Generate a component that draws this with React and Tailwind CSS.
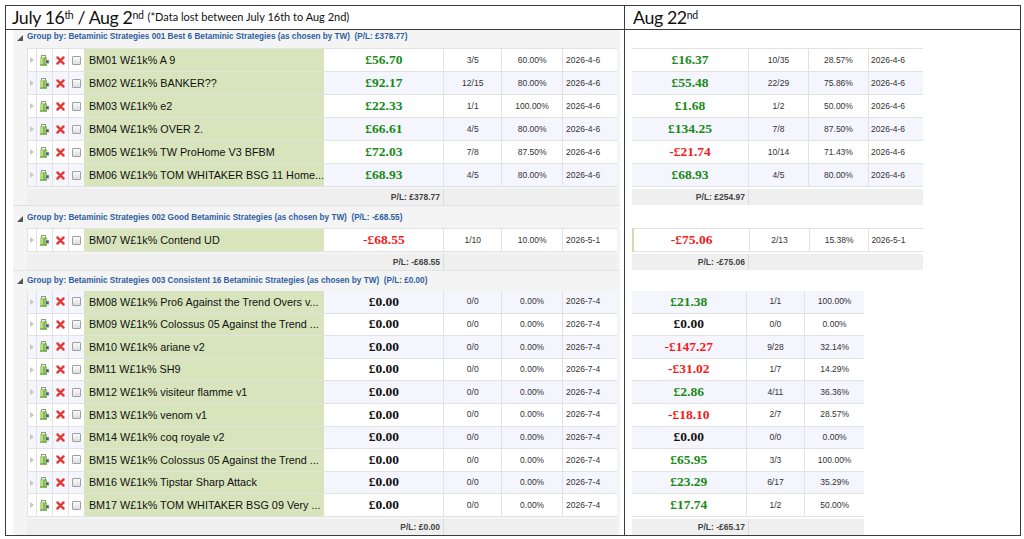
import React from 'react';

// Betaminic strategy comparison: July 16th / Aug 2nd vs Aug 22nd

const group1 = [
  ['BM01 W£1k% A 9', '£56.70', 'g', '3/5', '60.00%', '2026-4-6'],
  ['BM02 W£1k% BANKER??', '£92.17', 'g', '12/15', '80.00%', '2026-4-6'],
  ['BM03 W£1k% e2', '£22.33', 'g', '1/1', '100.00%', '2026-4-6'],
  ['BM04 W£1k% OVER 2.', '£66.61', 'g', '4/5', '80.00%', '2026-4-6'],
  ['BM05 W£1k% TW ProHome V3 BFBM', '£72.03', 'g', '7/8', '87.50%', '2026-4-6'],
  ['BM06 W£1k% TOM WHITAKER BSG 11 Home...', '£68.93', 'g', '4/5', '80.00%', '2026-4-6'],
];

const group1Right = [
  ['£16.37', 'g', '10/35', '28.57%', '2026-4-6'],
  ['£55.48', 'g', '22/29', '75.86%', '2026-4-6'],
  ['£1.68', 'g', '1/2', '50.00%', '2026-4-6'],
  ['£134.25', 'g', '7/8', '87.50%', '2026-4-6'],
  ['-£21.74', 'r', '10/14', '71.43%', '2026-4-6'],
  ['£68.93', 'g', '4/5', '80.00%', '2026-4-6'],
];

const group2 = [['BM07 W£1k% Contend UD', '-£68.55', 'r', '1/10', '10.00%', '2026-5-1']];
const group2Right = [['-£75.06', 'r', '2/13', '15.38%', '2026-5-1']];

const group3Names = [
  'BM08 W£1k% Pro6 Against the Trend Overs v...',
  'BM09 W£1k% Colossus 05 Against the Trend ...',
  'BM10 W£1k% ariane v2',
  'BM11 W£1k% SH9',
  'BM12 W£1k% visiteur flamme v1',
  'BM13 W£1k% venom v1',
  'BM14 W£1k% coq royale v2',
  'BM15 W£1k% Colossus 05 Against the Trend ...',
  'BM16 W£1k% Tipstar Sharp Attack',
  'BM17 W£1k% TOM WHITAKER BSG 09 Very ...',
];
const group3 = group3Names.map((n) => [n, '£0.00', 'k', '0/0', '0.00%', '2026-7-4']);

const group3Right = [
  ['£21.38', 'g', '1/1', '100.00%'],
  ['£0.00', 'k', '0/0', '0.00%'],
  ['-£147.27', 'r', '9/28', '32.14%'],
  ['-£31.02', 'r', '1/7', '14.29%'],
  ['£2.86', 'g', '4/11', '36.36%'],
  ['-£18.10', 'r', '2/7', '28.57%'],
  ['£0.00', 'k', '0/0', '0.00%'],
  ['£65.95', 'g', '3/3', '100.00%'],
  ['£23.29', 'g', '6/17', '35.29%'],
  ['£17.74', 'g', '1/2', '50.00%'],
];

function Money({ value, tone }) {
  const color = tone === 'g' ? 'text-[#178a17]' : tone === 'r' ? 'text-[#f01c1c]' : 'text-[#111]';
  return (
    <span className={`font-['Liberation_Serif',serif] text-[13.5px] font-bold ${color}`}>{value}</span>
  );
}

function Expander() {
  return (
    <svg width="4" height="6" viewBox="0 0 4 6">
      <polygon points="0,0 4,3 0,6" fill="#c8c8c8" />
    </svg>
  );
}

function EditIcon() {
  return (
    <svg width="11" height="11" viewBox="0 0 11 11">
      <rect x="2.5" y="0.5" width="4" height="2.5" fill="none" stroke="#8a9a80" strokeWidth="1" />
      <rect x="1" y="2.5" width="7" height="8" fill="#86bf4c" />
      <rect x="1" y="2.5" width="3" height="8" fill="#b4dc7c" />
      <rect x="6.5" y="5" width="3.5" height="3.5" fill="#5a636c" stroke="#c9d0d6" strokeWidth="0.6" />
      <rect x="1" y="9.5" width="7" height="1" fill="#5a9a34" />
    </svg>
  );
}

function DeleteIcon() {
  return (
    <svg width="9" height="9" viewBox="0 0 9 9">
      <path d="M1.5 1.5 L7.5 7.5 M7.5 1.5 L1.5 7.5" stroke="#f2a0a0" strokeWidth="3" strokeLinecap="round" />
      <path d="M1.5 1.5 L7.5 7.5 M7.5 1.5 L1.5 7.5" stroke="#e2312c" strokeWidth="1.8" strokeLinecap="round" />
    </svg>
  );
}

function Checkbox() {
  return (
    <div className="h-[9px] w-[9px] rounded-[1px] border border-[#a0a0a0] bg-gradient-to-b from-[#fbfbfb] to-[#dedede]" />
  );
}

function GroupToggle() {
  return (
    <svg width="6" height="6" viewBox="0 0 6 6">
      <polygon points="6,0 6,6 0,6" fill="#555" />
    </svg>
  );
}

function LeftRow({ row, alt, h }) {
  const [name, value, tone, count, pct, date] = row;
  const bg = alt ? 'bg-[#f5f5fd]' : 'bg-white';
  return (
    <div className={`flex ${h} border-b border-[#e2e2e2] ${bg}`}>
      <div className="flex w-[9px] items-center justify-center border-r border-[#e2e2e2]">
        <Expander />
      </div>
      <div className="flex w-[16px] items-center justify-center border-r border-[#e2e2e2]">
        <EditIcon />
      </div>
      <div className="flex w-[16px] items-center justify-center border-r border-[#e2e2e2]">
        <DeleteIcon />
      </div>
      <div className="flex w-[15px] items-center justify-center">
        <Checkbox />
      </div>
      <div className="flex w-[241px] items-center overflow-hidden bg-[#d7e4bc] pl-[5px] text-[10.8px] text-[#111] whitespace-nowrap">
        {name}
      </div>
      <div className="flex w-[120px] items-center justify-center border-r border-[#e2e2e2]">
        <Money value={value} tone={tone} />
      </div>
      <div className="flex w-[58px] items-center justify-center border-r border-[#e2e2e2]">{count}</div>
      <div className="flex w-[61px] items-center justify-center border-r border-[#e2e2e2]">{pct}</div>
      <div className="flex w-[54px] items-center pl-[3px]">{date}</div>
    </div>
  );
}

function RightRow({ row, alt, h }) {
  const [value, tone, count, pct, date] = row;
  const bg = alt ? 'bg-[#f5f5fd]' : 'bg-white';
  return (
    <div className={`flex ${h} border-b border-[#e2e2e2] ${bg}`}>
      <div className="flex w-[117px] items-center justify-center border-r border-[#e2e2e2]">
        <Money value={value} tone={tone} />
      </div>
      <div className="flex w-[60px] items-center justify-center border-r border-[#e2e2e2]">{count}</div>
      <div className={`flex w-[60px] items-center justify-center ${date ? 'border-r border-[#e2e2e2]' : ''}`}>{pct}</div>
      {date && <div className="flex w-[54px] items-center pl-[2px]">{date}</div>}
    </div>
  );
}

function LeftFooter({ text }) {
  return (
    <div className="mt-[2px] flex h-[16px] w-[590px] bg-[#efefef]">
      <div className="flex w-[417px] items-center justify-end border-r border-[#dadada] pr-[3px] font-bold text-[#444]">
        {text}
      </div>
    </div>
  );
}

function RightFooter({ text, wide }) {
  return (
    <div className={`mt-[2px] flex h-[16px] bg-[#efefef] ${wide ? 'w-[291px]' : 'w-[232px]'}`}>
      <div className="flex w-[117px] items-center justify-end border-r border-[#dadada] pr-[3px] font-bold text-[#444]">
        {text}
      </div>
    </div>
  );
}

function GroupHeader({ label, pl, h }) {
  return (
    <div className={`flex ${h} items-center gap-[4px] pl-[4px] text-[8.2px] font-bold text-[#2f5f9f] whitespace-nowrap`}>
      <GroupToggle />
      <span>
        {label}&nbsp;&nbsp;(P/L: {pl})
      </span>
    </div>
  );
}

export default function App() {
  return (
    <div className="h-[539px] w-[1024px] overflow-hidden bg-white pl-[5px] pt-[5px] font-['Liberation_Sans',Arial,sans-serif] text-[8.5px] text-[#333]">
      <div className="flex h-[531px] w-[1016px] flex-col border border-[#3c3c3c]">
        {/* Header row */}
        <div className="flex h-[24px] border-b border-[#3c3c3c] font-['Lato',sans-serif] text-[#111]">
          <div className="flex w-[619px] items-center border-r border-[#3c3c3c] pl-[6px] whitespace-nowrap">
            <span className="text-[17.8px] tracking-[-0.4px]">
              July 16<sup className="text-[10.5px]">th</sup> / Aug 2<sup className="text-[10.5px]">nd</sup>
            </span>
            <span className="ml-[4px] text-[11px]">(*Data lost between July 16th to Aug 2nd)</span>
          </div>
          <div className="flex flex-1 items-center pl-[8px]">
            <span className="text-[17.8px] tracking-[-0.4px]">
              Aug 22<sup className="text-[10.5px]">nd</sup>
            </span>
          </div>
        </div>

        <div className="flex flex-1">
          {/* Left: July 16th / Aug 2nd */}
          <div className="flex w-[619px] flex-col border-r border-[#3c3c3c] pl-[7px]">
            <div className="w-[607px] border-b border-[#e0e0e0] bg-[#f4f4f4]">
              <GroupHeader
                h="h-[15px]"
                label="Group by: Betaminic Strategies 001 Best 6 Betaminic Strategies (as chosen by TW)"
                pl="£378.77"
              />
              <div className="ml-[14px] mt-[3px] w-[590px] border-l border-t border-[#e2e2e2]">
                {group1.map((r, i) => (
                  <LeftRow key={r[0]} row={r} alt={i % 2 === 1} h="h-[23px]" />
                ))}
              </div>
              <div className="ml-[14px]">
                <LeftFooter text="P/L: £378.77" />
              </div>
            </div>

            <div className="w-[607px] bg-[#f4f4f4]">
              <div className="pt-[3px]">
                <GroupHeader
                  h="h-[19px]"
                  label="Group by: Betaminic Strategies 002 Good Betaminic Strategies (as chosen by TW)"
                  pl="-£68.55"
                />
              </div>
              <div className="ml-[14px] w-[590px] border-l border-t border-[#e2e2e2]">
                {group2.map((r) => (
                  <LeftRow key={r[0]} row={r} alt={false} h="h-[23px]" />
                ))}
              </div>
              <div className="ml-[14px]">
                <LeftFooter text="P/L: -£68.55" />
              </div>
            </div>

            <div className="w-[607px] flex-1 border-t border-[#e4e4e4] bg-[#f4f4f4]">
              <GroupHeader
                h="h-[20px]"
                label="Group by: Betaminic Strategies 003 Consistent 16 Betaminic Strategies (as chosen by TW)"
                pl="£0.00"
              />
              <div className="ml-[14px] w-[590px] border-l border-[#e2e2e2]">
                {group3.map((r, i) => (
                  <LeftRow key={r[0]} row={r} alt={i % 2 === 0} h="h-[22.6px]" />
                ))}
              </div>
              <div className="ml-[14px]">
                <LeftFooter text="P/L: £0.00" />
              </div>
            </div>
          </div>

          {/* Right: Aug 22nd */}
          <div className="flex flex-1 flex-col pl-[7px]">
            <div className="h-[18px]" />
            <div className="w-[291px] border-t border-[#e2e2e2]">
              {group1Right.map((r, i) => (
                <RightRow key={i} row={r} alt={i % 2 === 1} h="h-[23px]" />
              ))}
            </div>
            <RightFooter text="P/L: £254.97" wide />

            <div className="h-[23px]" />
            <div className="w-[291px] border-l-2 border-t border-l-[#d0dcb4] border-t-[#e2e2e2]">
              {group2Right.map((r, i) => (
                <RightRow key={i} row={r} alt={false} h="h-[23px]" />
              ))}
            </div>
            <RightFooter text="P/L: -£75.06" wide />

            <div className="h-[21px]" />
            <div className="w-[232px]">
              {group3Right.map((r, i) => (
                <RightRow key={i} row={r} alt={i % 2 === 0} h="h-[22.6px]" />
              ))}
            </div>
            <RightFooter text="P/L: -£65.17" />
          </div>
        </div>
      </div>
    </div>
  );
}
